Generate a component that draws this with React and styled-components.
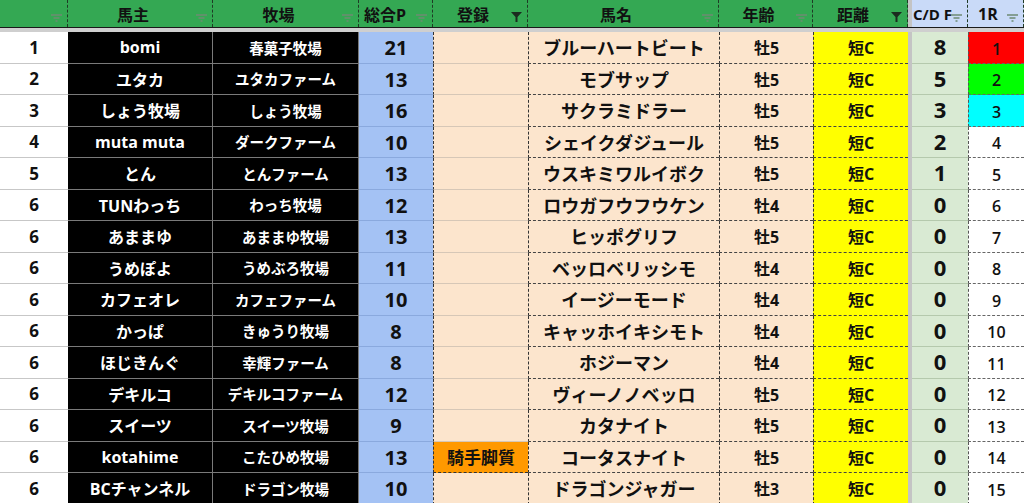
import React from "react";
import styled, { createGlobalStyle, css } from "styled-components";

const GlobalStyle = createGlobalStyle`
  body {
    margin: 0;
    background: #ffffff;
    overflow: hidden;
    font-family: "Open Sans", "Noto Sans CJK JP", sans-serif;
  }
`;

const COLS = "68px 145px 146px 74px 95px 191px 94px 95px 4px 56px 56px";

const Sheet = styled.div`
  width: 1024px;
  height: 503px;
  overflow: hidden;
`;

const HeadRow = styled.div`
  display: grid;
  grid-template-columns: ${COLS};
  height: 27px;
  border-bottom: 1px solid #1a1a1a;
`;

const HeadCell = styled.div`
  position: relative;
  display: flex;
  align-items: center;
  justify-content: ${(p) => (p.$left ? "flex-start" : "center")};
  padding: ${(p) => (p.$left ? `0 0 0 ${p.$pad || 3}px` : "0 14px 0 0")};
  background: ${(p) => (p.$blue ? "#c9daf8" : "#34a853")};
  border-right: 1px dashed #1f3a25;
  font-family: "Open Sans", "Noto Sans CJK JP", sans-serif;
  font-weight: 700;
  font-size: ${(p) => p.$size || 16}px;
  color: #111;
  white-space: nowrap;
  overflow: hidden;
`;

const HeadDivider = styled.div`
  background: #c4c4c4;
`;

const FilterMark = styled.svg`
  position: absolute;
  right: 5px;
  top: ${(p) => (p.$active ? 12 : 14)}px;
`;

const Band = styled.div`
  height: 4px;
  background: #cfcfcf;
`;

const Row = styled.div`
  display: grid;
  grid-template-columns: ${COLS};
  height: 31.5px;
`;

const cellBase = css`
  box-sizing: border-box;
  display: flex;
  align-items: center;
  justify-content: center;
  white-space: nowrap;
  overflow: hidden;
  font-family: "Open Sans", "Noto Sans CJK JP", sans-serif;
  font-weight: 700;
  color: #111;
`;

const RankCell = styled.div`
  ${cellBase}
  background: #ffffff;
  border-bottom: 1px solid #c7c7c7;
  font-size: 17px;
`;

const OwnerCell = styled.div`
  ${cellBase}
  background: #000000;
  color: #ffffff;
  border-bottom: 1px solid #7a7a7a;
  border-right: 1px solid #7a7a7a;
  font-size: ${(p) => p.$size || 16}px;
`;

const PointCell = styled.div`
  ${cellBase}
  background: #a4c2f4;
  border-bottom: 1px solid #8aa9de;
  font-size: 20px;
  padding-top: 1px;
`;

const EntryCell = styled.div`
  ${cellBase}
  background: ${(p) => (p.$tag ? "#ff9900" : "#fce5cd")};
  border-left: 1px dashed #333;
  border-bottom: ${(p) => (p.$tag ? "1px dashed #333" : "1px solid #d6c7b7")};
  font-size: 17px;
  font-weight: 600;
`;

const PeachCell = styled.div`
  ${cellBase}
  background: ${(p) => (p.$yellow ? "#ffff00" : "#fce5cd")};
  border-left: 1px dashed #333;
  border-bottom: 1px dashed #444;
  font-size: ${(p) => p.$size || 16}px;
`;

const Divider = styled.div`
  background: #c4c4c4;
`;

const CdCell = styled.div`
  ${cellBase}
  background: #d9ead3;
  border-bottom: 1px solid #b5c9ad;
  font-size: 22px;
  padding-bottom: 2px;
`;

const RaceCell = styled.div`
  ${cellBase}
  background: ${(p) => p.$bg || "#ffffff"};
  border-left: 1px dashed #555;
  border-bottom: 1px dashed #666;
  font-size: 16px;
  font-weight: 600;
  padding-top: 3px;
`;

const Filter = ({ active }) =>
  active ? (
    <FilterMark $active width="11" height="10" viewBox="0 0 11 10">
      <path d="M0 0 H11 L6.5 5 V10 H4.5 V5 Z" fill="#1b2b1f" />
    </FilterMark>
  ) : (
    <FilterMark width="11" height="8" viewBox="0 0 11 8">
      <path d="M0 1 H11 M2.5 4 H8.5 M4.5 7 H6.5" stroke="#6d8b73" strokeWidth="1.3" />
    </FilterMark>
  );

const raceColors = { 1: "#ff0000", 2: "#00ff00", 3: "#00ffff" };

const rows = [
  ["1", "bomi", "春菓子牧場", 21, "", "ブルーハートビート", "牡5", 8],
  ["2", "ユタカ", "ユタカファーム", 13, "", "モブサップ", "牡5", 5],
  ["3", "しょう牧場", "しょう牧場", 16, "", "サクラミドラー", "牡5", 3],
  ["4", "muta muta", "ダークファーム", 10, "", "シェイクダジュール", "牡5", 2],
  ["5", "とん", "とんファーム", 13, "", "ウスキミワルイボク", "牡5", 1],
  ["6", "TUNわっち", "わっち牧場", 12, "", "ロウガフウフウケン", "牡4", 0],
  ["6", "あままゆ", "あままゆ牧場", 13, "", "ヒッポグリフ", "牡5", 0],
  ["6", "うめぽよ", "うめぶろ牧場", 11, "", "ベッロベリッシモ", "牡4", 0],
  ["6", "カフェオレ", "カフェファーム", 10, "", "イージーモード", "牡4", 0],
  ["6", "かっぱ", "きゅうり牧場", 8, "", "キャッホイキシモト", "牡4", 0],
  ["6", "ほじきんぐ", "幸輝ファーム", 8, "", "ホジーマン", "牡4", 0],
  ["6", "デキルコ", "デキルコファーム", 12, "", "ヴィーノノベッロ", "牡5", 0],
  ["6", "スイーツ", "スイーツ牧場", 9, "", "カタナイト", "牡5", 0],
  ["6", "kotahime", "こたひめ牧場", 13, "騎手脚質", "コータスナイト", "牡5", 0],
  ["6", "BCチャンネル", "ドラゴン牧場", 10, "", "ドラゴンジャガー", "牡3", 0],
];

const App = () => (
  <Sheet>
    <GlobalStyle />
    <HeadRow>
      <HeadCell><Filter /></HeadCell>
      <HeadCell>馬主<Filter /></HeadCell>
      <HeadCell>牧場<Filter /></HeadCell>
      <HeadCell $left $pad={5}>総合P<Filter /></HeadCell>
      <HeadCell>登録<Filter active /></HeadCell>
      <HeadCell>馬名<Filter /></HeadCell>
      <HeadCell>年齢<Filter /></HeadCell>
      <HeadCell>距離<Filter active /></HeadCell>
      <HeadDivider />
      <HeadCell $blue $left $pad={1} $size={15}>C/D F<Filter /></HeadCell>
      <HeadCell $blue $left $pad={10}>1R<Filter /></HeadCell>
    </HeadRow>
    <Band />
    {rows.map((r, i) => (
      <Row key={i}>
        <RankCell>{r[0]}</RankCell>
        <OwnerCell>{r[1]}</OwnerCell>
        <OwnerCell $size={14.5}>{r[2]}</OwnerCell>
        <PointCell>{r[3]}</PointCell>
        <EntryCell $tag={!!r[4]}>{r[4]}</EntryCell>
        <PeachCell $size={18}>{r[5]}</PeachCell>
        <PeachCell>{r[6]}</PeachCell>
        <PeachCell $yellow>短C</PeachCell>
        <Divider />
        <CdCell>{r[7]}</CdCell>
        <RaceCell $bg={raceColors[i + 1]}>{i + 1}</RaceCell>
      </Row>
    ))}
  </Sheet>
);

export default App;
